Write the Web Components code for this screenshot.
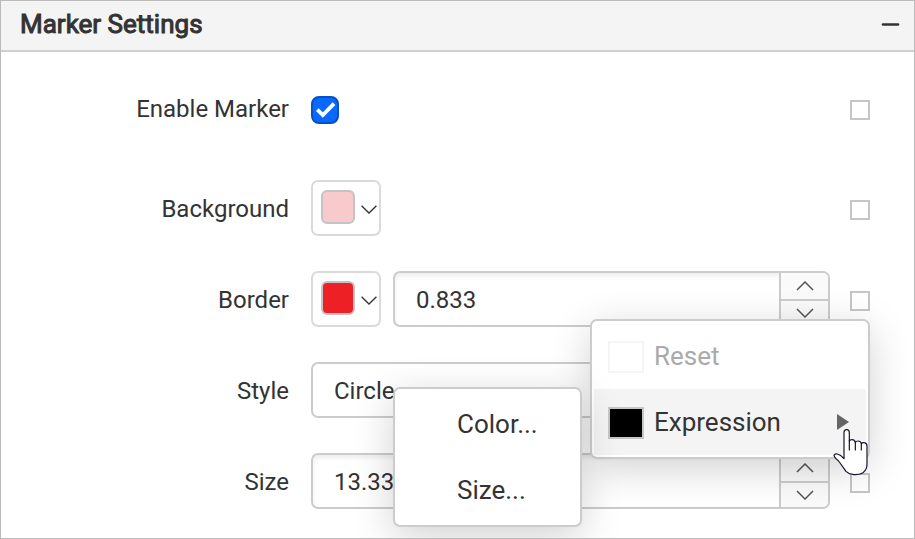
<!DOCTYPE html>
<html lang="en">
<head>
<meta charset="utf-8">
<title>Marker Settings</title>
<style>
  body { margin: 0; background: #fff; color: #333; font-family: Roboto, "Liberation Sans", sans-serif; font-size: 24px; line-height: 28px; }
</style>
</head>
<body>
<settings-panel heading="Marker Settings">
  <check-row label="Enable Marker"></check-row>
  <color-row label="Background" color="#f8cacb"></color-row>
  <color-row label="Border" color="#ed2026" value="0.833"></color-row>
  <select-row label="Style" value="Circle"></select-row>
  <number-row label="Size" value="13.33"></number-row>
  <popup-menu slot="menu" label="Border options">
    <menu-entry icon="empty" disabled>Reset</menu-entry>
    <menu-entry icon="filled" active submenu>Expression</menu-entry>
  </popup-menu>
  <popup-menu slot="submenu" label="Expression">
    <menu-entry>Color...</menu-entry>
    <menu-entry>Size...</menu-entry>
  </popup-menu>
  <hand-pointer slot="pointer"></hand-pointer>
</settings-panel>

<script>
const base = `
  *, *::before { box-sizing: border-box; }
  button, input, select { font: inherit; color: inherit; margin: 0; padding: 0; border: 0; background: none; outline: none; }
  button { cursor: pointer; }
  svg { display: block; fill: none; }
`;

class SettingsPanel extends HTMLElement {
  constructor() {
    super();
    this.attachShadow({ mode: 'open' }).innerHTML = `
      <style>${base}
        :host { display: block; position: relative; box-sizing: border-box; border: 1px solid #bbb; overflow: hidden; }
        header { display: flex; align-items: center; justify-content: space-between; padding: 8px 14px 11px 19px;
                 background: #f4f4f4; border-bottom: 2px solid #d0d0d0; }
        h2 { margin: 0; font-size: 26px; line-height: 30px; font-weight: 400; -webkit-text-stroke: 1px #333; }
        header button { display: block; }
        .rows { display: flex; flex-direction: column; gap: 35px; padding: 28px 44px 29px 0; }
        .menu, .submenu, .pointer { position: absolute; }
        .menu { top: 318px; right: 44px; width: 280px; }
        .submenu { top: 386px; right: 332px; width: 189px; }
        .pointer { top: 427px; right: 45px; }
      </style>
      <header>
        <h2></h2>
        <button type="button" aria-label="Collapse"><svg width="20" height="20" viewBox="0 0 20 20" stroke="#333" stroke-width="2.6" stroke-linecap="round"><path d="M3 10.5H18"/></svg></button>
      </header>
      <div class="rows"><slot></slot></div>
      <div class="menu"><slot name="menu"></slot></div>
      <div class="submenu"><slot name="submenu"></slot></div>
      <div class="pointer"><slot name="pointer"></slot></div>`;
    this.shadowRoot.querySelector('h2').textContent = this.getAttribute('heading');
  }
}

/* Shared row layout: label, control area, advanced-options marker. */
class SettingRow extends HTMLElement {
  constructor() {
    super();
    this.attachShadow({ mode: 'open' }).innerHTML = `
      <style>${base}
        :host { display: grid; grid-template-columns: 290fr 519fr 20px; column-gap: 20px; align-items: center; min-height: 56px; }
        label { text-align: right; padding: 1px 2px 0 0; }
        .controls { display: flex; gap: 12px; min-width: 0; }
        .more { width: 20px; height: 20px; margin-top: 4px; border: 2px solid #c6c6c6; background: #fff; }
      </style>
      <label for="control"></label>
      <div class="controls">${this.control()}</div>
      <button class="more" type="button" aria-label="More options"></button>`;
    this.shadowRoot.querySelector('label').textContent = this.getAttribute('label');
  }
  control() { return ''; }
}

class CheckRow extends SettingRow {
  control() {
    return `<style>
        :host { margin-bottom: 9px; }
        .check { display: grid; margin-top: 4px; }
        .check > * { grid-area: 1 / 1; }
        input { appearance: none; width: 28px; height: 28px; border: 2px solid #0550c2; border-radius: 8px; }
        input:checked { background: #0869ff; }
        .check svg { pointer-events: none; }
      </style>
      <span class="check"><input id="control" type="checkbox" checked>
      <svg width="28" height="28" viewBox="0 0 28 28" stroke="#fff" stroke-width="3.8"><path d="M6.3 13.7l5.5 5.3L23 7.7"/></svg></span>`;
  }
}

const numberMarkup = value => `<style>
    .number { display: grid; grid-template-columns: 1fr 49px; flex: 1; min-width: 0; height: 56px;
              border: 2px solid #ccc; border-radius: 7px; overflow: hidden; box-shadow: inset 0 3px 5px #00000012; }
    .number input { min-width: 0; width: 100%; padding: 2px 0 0 21px; }
    .spin { display: grid; grid-template-rows: 1fr 1fr; border-left: 2px solid #ccc; background: #fafafa; }
    .spin button { display: grid; place-items: center; }
    .spin button + button { border-top: 2px solid #ccc; }
  </style>
  <span class="number"><input id="control" type="text" inputmode="decimal" value="${value}">
    <span class="spin">
      <button type="button" aria-label="Increase"><svg width="18" height="10" viewBox="0 0 18 10" stroke="#555" stroke-width="1.5"><path d="M1 9l8-8 8 8"/></svg></button>
      <button type="button" aria-label="Decrease"><svg width="18" height="10" viewBox="0 0 18 10" stroke="#555" stroke-width="1.5"><path d="M1 1l8 8 8-8"/></svg></button>
    </span></span>`;

class NumberRow extends SettingRow {
  control() { return numberMarkup(this.getAttribute('value')); }
}

class ColorRow extends SettingRow {
  control() {
    const value = this.getAttribute('value');
    return `<style>
        .color { display: flex; align-items: center; gap: 6px; flex: none; width: 70px; height: 56px; padding: 0 0 2px 8px;
                 border: 2px solid #dadada; border-radius: 7px; background: #fff; }
        .swatch { width: 34px; height: 34px; border: 2px solid #c4c4c4; border-radius: 6px; background: ${this.getAttribute('color')}; }
        .color svg { margin-top: 4px; }
      </style>
      <button class="color" type="button" ${value ? '' : 'id="control"'} aria-label="${this.getAttribute('label')} color">
        <span class="swatch"></span>
        <svg width="16" height="9" viewBox="0 0 16 9" stroke="#333" stroke-width="1.3"><path d="M.6.8L8 8 15.4.8"/></svg>
      </button>${value ? numberMarkup(value) : ''}`;
  }
}

class SelectRow extends SettingRow {
  control() {
    return `<style>
        select { appearance: none; flex: 1; min-width: 0; height: 56px; padding: 2px 0 0 21px; border: 2px solid #ccc; border-radius: 7px; background: #fff; }
      </style>
      <select id="control"><option>${this.getAttribute('value')}</option></select>`;
  }
}

class PopupMenu extends HTMLElement {
  constructor() {
    super();
    this.attachShadow({ mode: 'open' }).innerHTML = `
      <style>
        :host { display: block; box-sizing: border-box; padding: 2px; border: 2px solid #ccc; border-radius: 7px;
                background: #fff; box-shadow: 0 10px 40px #0000002e; }
      </style>
      <div role="menu"><slot></slot></div>`;
    this.shadowRoot.querySelector('div').setAttribute('aria-label', this.getAttribute('label'));
  }
}

class MenuEntry extends HTMLElement {
  constructor() {
    super();
    const icon = this.getAttribute('icon') || '';
    this.attachShadow({ mode: 'open' }).innerHTML = `
      <style>${base}
        :host { display: block; font-size: 26px; line-height: 30px; }
        :host([active]) { background: #f4f4f4; }
        button { display: flex; align-items: center; gap: 10px; width: 100%; height: 66px; padding: 0 17px 0 14px; text-align: left; }
        button:disabled { color: #aaa; }
        .icon { flex: none; width: 36px; height: 32px; margin-top: 2px; }
        .empty { border: 2px solid #f5f5f5; }
        .filled { border: 2px solid #c6c6c6; background: #000; }
        .text { flex: 1; }
      </style>
      <button type="button" role="menuitem" ${this.hasAttribute('disabled') ? 'disabled' : ''}>
        <span class="icon ${icon}"></span><span class="text"><slot></slot></span>
        ${this.hasAttribute('submenu') ? '<svg width="12" height="16" viewBox="0 0 12 16"><path d="M0 0l12 8-12 8z" fill="#666"/></svg>' : ''}
      </button>`;
  }
}

class HandPointer extends HTMLElement {
  constructor() {
    super();
    this.attachShadow({ mode: 'open' }).innerHTML = `
      <style>:host { display: block; pointer-events: none; } svg { display: block; }</style>
      <svg width="36" height="48" viewBox="22 68 108 144" fill="#fff" stroke="#15152a" stroke-width="3.6" stroke-linejoin="round" stroke-linecap="round">
        <path d="M55 160V82Q55 73 63 73Q71 73 71 82V107Q73 103 79 103Q87 103 89 111Q92 107 97 107Q105 107 107 115Q110 111 116 112Q124 113 124 123V177Q124 193 112 202Q101 209 84 208Q70 207 61 198L41 170Q38 165 31 160Q25 154 25 150Q27 145 35 146Q45 148 55 160Z"/>
        <path d="M71 106V134M89 111V134M107 115V134" fill="none"/>
      </svg>`;
  }
}

customElements.define('check-row', CheckRow);
customElements.define('color-row', ColorRow);
customElements.define('number-row', NumberRow);
customElements.define('select-row', SelectRow);
customElements.define('menu-entry', MenuEntry);
customElements.define('popup-menu', PopupMenu);
customElements.define('hand-pointer', HandPointer);
customElements.define('settings-panel', SettingsPanel);
</script>
</body>
</html>
